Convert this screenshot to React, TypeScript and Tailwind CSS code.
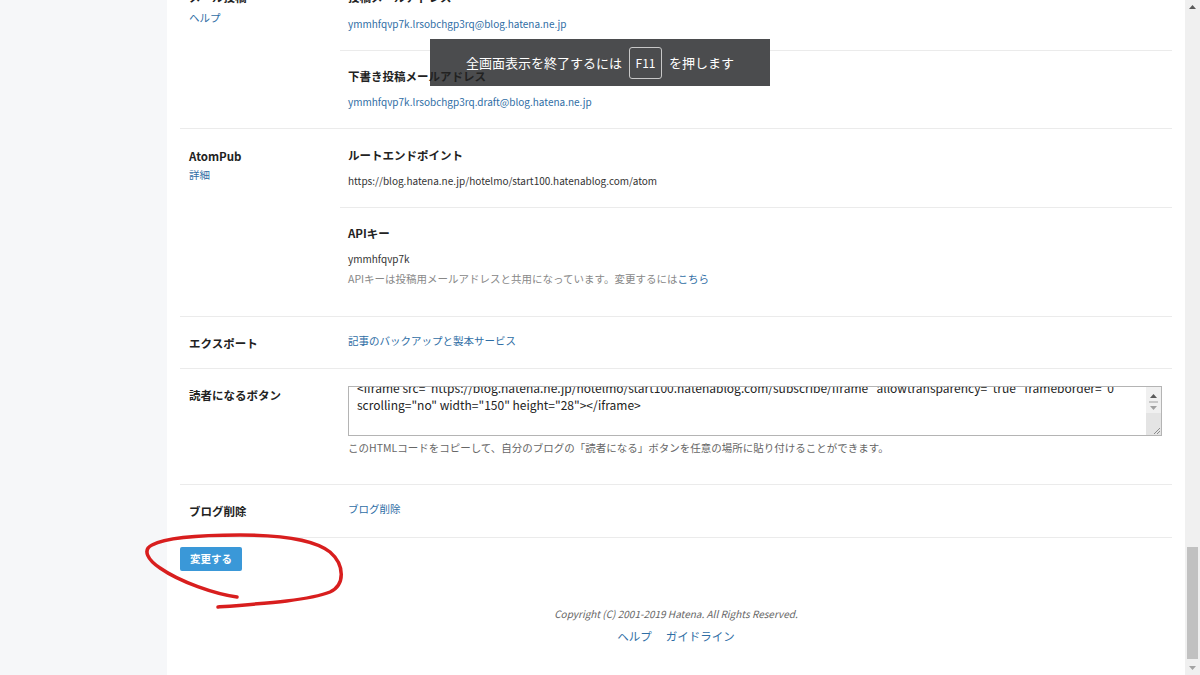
import React from "react";

const FONT = { fontFamily: '"Noto Sans CJK JP", "Noto Sans", sans-serif' };

function Tri({ dir, color = "#5a5a5a" }: { dir: "up" | "down"; color?: string }) {
  return (
    <svg width="7" height="4" viewBox="0 0 7 4">
      {dir === "up" ? <path d="M0 4 L3.5 0 L7 4 Z" fill={color} /> : <path d="M0 0 L7 0 L3.5 4 Z" fill={color} />}
    </svg>
  );
}

function Label({ children }: { children: React.ReactNode }) {
  return <div className="text-[11.5px] leading-[16px] font-bold text-[#222]">{children}</div>;
}

function Heading({ children, className = "" }: { children: React.ReactNode; className?: string }) {
  return <div className={`text-[11.5px] leading-[16px] font-bold text-[#222] ${className}`}>{children}</div>;
}

const link = "text-[#2f6ea5]";

export default function App() {
  return (
    <div style={FONT} className="relative w-[1200px] h-[675px] overflow-hidden flex bg-[#f6f7f9] text-[#333]">
      {/* left margin of the settings page */}
      <div className="w-[167px] shrink-0" />

      {/* settings panel */}
      <div className="w-[1018px] shrink-0 bg-white px-[13px]">
        <div className="-mt-[29px]">
          {/* メール投稿 */}
          <div className="grid grid-cols-[160px_1fr] border-b border-[#ebebeb]">
            <div className="pl-[9px] pt-[18px]">
              <Label>メール投稿</Label>
              <div className={`mt-[5px] text-[10.5px] leading-[16px] ${link}`}>ヘルプ</div>
            </div>
            <div>
              <div className="pl-[8px] pt-[18px] pb-[18px] border-b border-[#ebebeb]">
                <Heading>投稿メールアドレス</Heading>
                <div className={`mt-[11px] text-[10px] leading-[16px] ${link}`}>ymmhfqvp7k.lrsobchgp3rq@blog.hatena.ne.jp</div>
              </div>
              <div className="pl-[8px] pt-[17px] pb-[18px]">
                <Heading className="relative z-20 w-fit">下書き投稿メールアドレス</Heading>
                <div className={`mt-[10px] text-[10px] leading-[16px] ${link}`}>ymmhfqvp7k.lrsobchgp3rq.draft@blog.hatena.ne.jp</div>
              </div>
            </div>
          </div>

          {/* AtomPub */}
          <div className="grid grid-cols-[160px_1fr] border-b border-[#ebebeb]">
            <div className="pl-[9px] pt-[19px]">
              <Label>AtomPub</Label>
              <div className={`mt-[3px] text-[10.5px] leading-[16px] ${link}`}>詳細</div>
            </div>
            <div>
              <div className="pl-[8px] pt-[18px] pb-[18px] border-b border-[#ebebeb]">
                <Heading>ルートエンドポイント</Heading>
                <div className="mt-[10px] text-[10px] leading-[16px] text-[#333]">https://blog.hatena.ne.jp/hotelmo/start100.hatenablog.com/atom</div>
              </div>
              <div className="pl-[8px] pt-[17px] pb-[29px]">
                <Heading>APIキー</Heading>
                <div className="mt-[10px] text-[10px] leading-[16px] text-[#333]">ymmhfqvp7k</div>
                <div className="mt-[4px] text-[10.5px] leading-[16px] text-[#888]">
                  APIキーは投稿用メールアドレスと共用になっています。変更するには<span className={link}>こちら</span>
                </div>
              </div>
            </div>
          </div>

          {/* エクスポート */}
          <div className="grid grid-cols-[160px_1fr] border-b border-[#ebebeb]">
            <div className="pl-[9px] pt-[18px] pb-[17px]">
              <Label>エクスポート</Label>
            </div>
            <div className="pl-[8px] pt-[16px]">
              <div className={`text-[10.5px] leading-[16px] ${link}`}>記事のバックアップと製本サービス</div>
            </div>
          </div>

          {/* 読者になるボタン */}
          <div className="grid grid-cols-[160px_1fr] border-b border-[#ebebeb]">
            <div className="pl-[9px] pt-[18px]">
              <Label>読者になるボタン</Label>
            </div>
            <div className="pl-[8px] pr-[10px] pt-[17px] pb-[28px]">
              <div className="flex h-[50px] border border-[#b4b4b4] bg-white">
                <div className="flex-1 overflow-hidden pl-[8px] pr-[12px]">
                  <div className="-mt-[8px] text-[12px] leading-[17px] text-[#222] whitespace-nowrap">
                    <div>&lt;iframe src="https://blog.hatena.ne.jp/hotelmo/start100.hatenablog.com/subscribe/iframe" allowtransparency="true" frameborder="0"</div>
                    <div>scrolling="no" width="150" height="28"&gt;&lt;/iframe&gt;</div>
                  </div>
                </div>
                <div className="w-[15px] flex flex-col bg-[#f0f0f0]">
                  <div className="h-[12px] flex items-end justify-center pb-[1px]">
                    <Tri dir="up" />
                  </div>
                  <div className="mx-[3px] mt-[2px] h-[2px] bg-[#c8c8c8]" />
                  <div className="h-[10px] flex items-center justify-center">
                    <Tri dir="down" color="#a0a0a0" />
                  </div>
                  <div className="flex-1 bg-[#e4e4e4] flex items-end justify-end">
                    <svg width="10" height="10" viewBox="0 0 10 10">
                      <path d="M9 3 L3 9 M9 6 L6 9" stroke="#8c8c8c" strokeWidth="1" />
                    </svg>
                  </div>
                </div>
              </div>
              <div className="mt-[4px] text-[10.5px] leading-[16px] text-[#666]">
                このHTMLコードをコピーして、自分のブログの「読者になる」ボタンを任意の場所に貼り付けることができます。
              </div>
            </div>
          </div>

          {/* ブログ削除 */}
          <div className="grid grid-cols-[160px_1fr] border-b border-[#ebebeb]">
            <div className="pl-[9px] pt-[18px] pb-[18px]">
              <Label>ブログ削除</Label>
            </div>
            <div className="pl-[8px] pt-[16px]">
              <div className={`text-[10.5px] leading-[16px] ${link}`}>ブログ削除</div>
            </div>
          </div>

          <button className="block mt-[9px] w-[62px] h-[24px] rounded-[2px] bg-[#3a98d8] text-white text-[10.5px] font-bold leading-[24px]">
            変更する
          </button>

          {/* footer */}
          <div className="mt-[35px] flex flex-col items-center">
            <div className="text-[10px] leading-[16px] italic text-[#666]">Copyright (C) 2001-2019 Hatena. All Rights Reserved.</div>
            <div className={`mt-[6px] flex gap-[14px] text-[11.5px] leading-[16px] ${link}`}>
              <span>ヘルプ</span>
              <span>ガイドライン</span>
            </div>
          </div>
        </div>
      </div>

      {/* window scrollbar */}
      <div className="w-[15px] shrink-0 flex flex-col bg-[#f0f0f0]">
        <div className="h-[14px] flex items-center justify-center">
          <Tri dir="up" />
        </div>
        <div className="flex-1 flex flex-col justify-end pb-[2px]">
          <div className="mx-[2px] h-[112px] bg-[#c1c1c1]" />
        </div>
        <div className="h-[14px] flex items-center justify-center">
          <Tri dir="down" color="#a3a3a3" />
        </div>
      </div>

      {/* fullscreen notice */}
      <div className="absolute left-[430px] top-[39px] w-[340px] h-[47px] z-10 bg-[#4b4c4e] flex items-center justify-center gap-[7px] text-white text-[13px]">
        <span>全画面表示を終了するには</span>
        <span className="w-[33px] h-[32px] border border-[#c8c8c8] rounded-[3px] flex items-center justify-center text-[12px]">F11</span>
        <span>を押します</span>
      </div>

      {/* hand-drawn red circle */}
      <svg className="absolute left-0 top-0 pointer-events-none z-20" width="1200" height="675" viewBox="0 0 1200 675">
        <path
          d="M237 597 C215 594 180 582 160 568 C148 560 142 550 152 545 C165 538 200 535 240 535 C280 535 315 540 330 552 C345 565 345 585 330 592 C310 600 270 603 218 607"
          fill="none"
          stroke="#d81e1e"
          strokeWidth="3.5"
          strokeLinecap="round"
          strokeLinejoin="round"
        />
      </svg>
    </div>
  );
}
